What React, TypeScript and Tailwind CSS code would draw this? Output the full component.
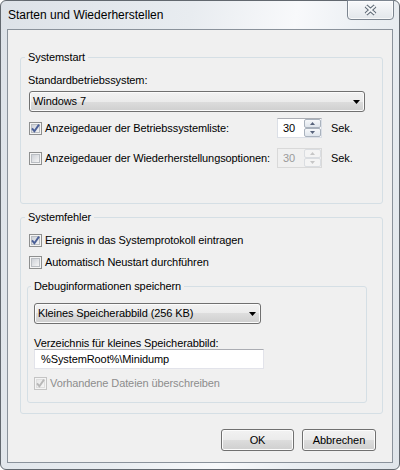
import React from "react";

const F = "font-['Liberation_Sans',Arial,sans-serif] text-[11px] tracking-[-0.1px] leading-[15px] text-black";

function CheckBox({ checked = false, disabled = false }: { checked?: boolean; disabled?: boolean }) {
  return (
    <svg width="13" height="13" viewBox="0 0 13 13" className="shrink-0 block">
      <defs>
        <linearGradient id="cbIn" x1="0" y1="0" x2="1" y2="1">
          <stop offset="0" stopColor="#cbcfd5" />
          <stop offset="1" stopColor="#f7f7f7" />
        </linearGradient>
        <linearGradient id="cbInD" x1="0" y1="0" x2="1" y2="1">
          <stop offset="0" stopColor="#e6e6e6" />
          <stop offset="1" stopColor="#f7f7f7" />
        </linearGradient>
      </defs>
      <rect x="0.5" y="0.5" width="12" height="12" fill="#f4f4f4" stroke={disabled ? "#c4c4c4" : "#8e8f8f"} />
      <rect
        x="2.5"
        y="2.5"
        width="8"
        height="8"
        fill={disabled ? "url(#cbInD)" : "url(#cbIn)"}
        stroke={disabled ? "#dedede" : "#b9bdc2"}
      />
      {checked && (
        <path
          d="M3 6.3 L5.4 9.2 L10 2.6"
          fill="none"
          stroke={disabled ? "#b8b8b8" : "#4a5f97"}
          strokeWidth="1.9"
        />
      )}
    </svg>
  );
}

function Arrow() {
  return (
    <svg width="7" height="4" viewBox="0 0 7 4" className="block shrink-0">
      <path d="M0 0 H7 L3.5 4 Z" fill="#000" />
    </svg>
  );
}

function Combo({ className, text }: { className: string; text: string }) {
  return (
    <div
      className={`flex items-center justify-between h-[21px] border border-[#707070] rounded-[3px] bg-[linear-gradient(#f2f2f2_0%,#ebebeb_50%,#dddddd_50%,#cfcfcf_100%)] shadow-[inset_0_0_0_1px_#fbfbfb] pl-[3px] pr-[4px] ${className}`}
    >
      <span>{text}</span>
      <Arrow />
    </div>
  );
}

function SpinBtn({ up, disabled }: { up?: boolean; disabled?: boolean }) {
  return (
    <div
      className={`flex-1 flex items-center justify-center border rounded-[2px] ${
        disabled
          ? "border-[#dadde1] bg-[#f4f4f4]"
          : "border-[#a9b2bd] bg-[linear-gradient(#f6f8fa,#dfe5ec)]"
      }`}
    >
      <svg width="5" height="3" viewBox="0 0 5 3" className="block">
        <path d={up ? "M0 3 L2.5 0 L5 3 Z" : "M0 0 H5 L2.5 3 Z"} fill={disabled ? "#c6c6c6" : "#56627a"} />
      </svg>
    </div>
  );
}

function Spinner({ disabled }: { disabled?: boolean }) {
  return (
    <div
      className={`flex w-[45px] h-[20px] border shrink-0 ${
        disabled
          ? "border-[#d9d9d9] bg-[#f0f0f0] text-[#9a9a9a]"
          : "border-[#dbdfe6] border-t-[#abadb3] bg-white"
      }`}
    >
      <div className="flex-1 flex items-center pl-[5px]">30</div>
      <div className="flex flex-col w-[17px]">
        <SpinBtn up disabled={disabled} />
        <SpinBtn disabled={disabled} />
      </div>
    </div>
  );
}

function Button({ className, label }: { className: string; label: string }) {
  return (
    <div
      className={`h-[22px] flex items-center justify-center border border-[#707070] rounded-[3px] bg-[linear-gradient(#f2f2f2_0%,#ebebeb_50%,#dddddd_50%,#cfcfcf_100%)] shadow-[inset_0_0_0_1px_#fcfcfc] ${className}`}
    >
      {label}
    </div>
  );
}

function CloseX() {
  return (
    <svg width="15" height="12" viewBox="0 0 15 12" className="block">
      <path d="M3 2 L12 10 M12 2 L3 10" stroke="#5c6773" strokeWidth="4" />
      <path d="M3 2 L12 10 M12 2 L3 10" stroke="#f3f5f7" strokeWidth="2" />
    </svg>
  );
}

export default function App() {
  return (
    <div className={`w-[400px] h-[470px] ${F}`}>
      <div className="w-full h-full flex flex-col border border-[#62686f] rounded-[6px] bg-[linear-gradient(100deg,#dde2e8_0%,#e8ecf0_40%,#f8f9fb_62%,#eaeef2_78%,#e0e5ea_100%)]">
        <div className="h-[28px] shrink-0 flex justify-between items-start">
          <span className="ml-[7px] mt-[7px] text-[12px] tracking-normal">Starten und Wiederherstellen</span>
          <div className="-mt-px mr-[5px] w-[47px] h-[20px] rounded-b-[4px] border border-[#7c8590] bg-[linear-gradient(#f8f9fb,#e3e7eb)] shadow-[inset_0_0_0_1px_rgba(255,255,255,0.7)] flex items-center justify-center">
            <CloseX />
          </div>
        </div>
        <div className="flex-1 mx-[6px] mb-[6px] border border-[#8a929b] bg-[#f0f0f0] flex flex-col pt-[20px] pl-[12px] pr-[9px]">
          <fieldset className="border border-[#d5dfe5] rounded-[3px] pl-[7px] pb-[35px]">
            <legend className="-ml-[3px] px-[3px]">Systemstart</legend>
            <div className="mt-[8px]">Standardbetriebssystem:</div>
            <Combo className="mt-[3px] ml-[1px] w-[336px]" text="Windows 7" />
            <div className="mt-[6px] ml-[1px] flex items-center">
              <div className="w-[248px] flex items-center">
                <CheckBox checked />
                <span className="ml-[3px]">Anzeigedauer der Betriebssystemliste:</span>
              </div>
              <Spinner />
              <span className="ml-[9px]">Sek.</span>
            </div>
            <div className="mt-[10px] ml-[1px] flex items-center">
              <div className="w-[248px] flex items-center">
                <CheckBox />
                <span className="ml-[3px] whitespace-nowrap">Anzeigedauer der Wiederherstellungsoptionen:</span>
              </div>
              <Spinner disabled />
              <span className="ml-[9px]">Sek.</span>
            </div>
          </fieldset>

          <fieldset className="mt-[6px] border border-[#d5dfe5] rounded-[3px] pl-[7px] pb-[10px]">
            <legend className="-ml-[3px] px-[3px]">Systemfehler</legend>
            <div className="mt-[8px] ml-[1px] h-[15px] flex items-center">
              <CheckBox checked />
              <span className="ml-[3px]">Ereignis in das Systemprotokoll eintragen</span>
            </div>
            <div className="mt-[7px] ml-[1px] h-[15px] flex items-center">
              <CheckBox />
              <span className="ml-[3px]">Automatisch Neustart durchführen</span>
            </div>
            <fieldset className="mt-[9px] -ml-[1px] w-[340px] border border-[#d5dfe5] rounded-[3px] pl-[6px] pb-[11px]">
              <legend className="-ml-[3px] px-[3px]">Debuginformationen speichern</legend>
              <Combo className="mt-[9px] w-[227px]" text="Kleines Speicherabbild (256 KB)" />
              <div className="mt-[12px]">Verzeichnis für kleines Speicherabbild:</div>
              <div className="relative -mt-[2px] w-[230px] h-[20px] border border-[#e2e3ea] border-t-[#abadb3] bg-white pl-[6px] flex items-center">
                {"%SystemRoot%\\Minidump"}
              </div>
              <div className="mt-[7px] h-[15px] flex items-center">
                <CheckBox checked disabled />
                <span className="ml-[3px] text-[#8d8d8d]">Vorhandene Dateien überschreiben</span>
              </div>
            </fieldset>
          </fieldset>

          <div className="mt-[15px] pr-[7px] flex justify-end gap-[8px]">
            <Button className="w-[73px]" label="OK" />
            <Button className="w-[74px]" label="Abbrechen" />
          </div>
        </div>
      </div>
    </div>
  );
}
